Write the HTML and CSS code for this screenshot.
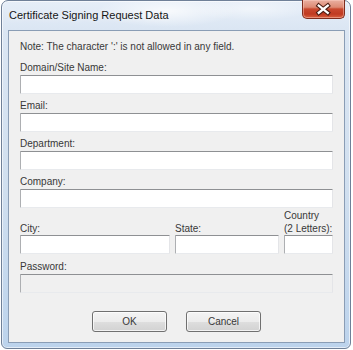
FILE: index.html
```html
<!DOCTYPE html>
<html>
<head>
<meta charset="utf-8">
<link rel="stylesheet" href="styles.css">
</head>
<body>
<div class="window">
  <div class="titlebar">
    <span class="title">Certificate Signing Request Data</span>
    <div class="close">
      <svg width="43" height="18" viewBox="0 0 43 18">
        <path d="M16.5 5.5 L26 13 M26 5.5 L16.5 13" stroke="#4a1c12" stroke-width="4.6" stroke-linecap="square" fill="none"/>
        <path d="M16.5 5.5 L26 13 M26 5.5 L16.5 13" stroke="#ffffff" stroke-width="2.4" stroke-linecap="square" fill="none"/>
      </svg>
    </div>
  </div>
  <div class="client">
    <p class="note">Note: The character ':' is not allowed in any field.</p>
    <div class="fields">
      <div class="field"><span class="label">Domain/Site Name:</span><div class="input"></div></div>
      <div class="field"><span class="label">Email:</span><div class="input"></div></div>
      <div class="field"><span class="label">Department:</span><div class="input"></div></div>
      <div class="field"><span class="label">Company:</span><div class="input"></div></div>
    </div>
    <div class="addr">
      <span class="alabel">City:</span>
      <span class="alabel">State:</span>
      <span class="alabel">Country<br>(2 Letters):</span>
      <div class="input"></div>
      <div class="input"></div>
      <div class="input"></div>
    </div>
    <div class="field pw"><span class="label">Password:</span><div class="input disabled"></div></div>
    <div class="buttons">
      <button class="btn">OK</button>
      <button class="btn">Cancel</button>
    </div>
  </div>
</div>
</body>
</html>
```
FILE: styles.css
```css
html, body {
  margin: 0;
  padding: 0;
  background: #ffffff;
}
body {
  font-family: "Liberation Sans", Arial, sans-serif;
  font-size: 10px;
  color: #383838;
}
.window {
  margin-left: 1px;
  width: 350px;
  height: 349px;
  box-sizing: border-box;
  border: 1px solid #6f8098;
  border-radius: 7px 7px 6px 6px;
  padding: 0 5px 5px 6px;
  display: flex;
  flex-direction: column;
  background:
    radial-gradient(ellipse 70px 16px at 165px 10px, rgba(255,255,255,0.75), rgba(255,255,255,0)),
    radial-gradient(ellipse 60px 12px at 250px 8px, rgba(255,255,255,0.5), rgba(255,255,255,0)),
    linear-gradient(180deg, #e6eef8 0px, #dbe6f3 28px, #d0dfef 55%, #bcd3ec 100%);
  box-shadow: inset 0 0 0 1px rgba(255,255,255,0.6);
}
.titlebar {
  height: 29px;
  display: flex;
  align-items: flex-start;
  flex-shrink: 0;
}
.title {
  padding-left: 1px;
  padding-top: 7px;
  line-height: 14px;
  font-size: 11px;
  color: #151515;
  text-shadow: 0 0 6px rgba(255,255,255,0.9);
}
.close {
  margin-left: auto;
  margin-top: -1px;
  width: 43px;
  height: 19px;
  box-sizing: border-box;
  border: 1px solid #7e2c1d;
  border-top: none;
  border-radius: 0 0 5px 5px;
  background: linear-gradient(180deg, #eab0a1 0%, #dd8a74 40%, #c9482e 50%, #c03a21 78%, #d9603f 100%);
  box-shadow: inset 0 0 0 1px rgba(255,210,200,0.45);
  display: flex;
}
.client {
  flex: 1;
  border: 1px solid #8a9db5;
  background: #f0f0f0;
  padding: 9px 11px 10px 11px;
  display: flex;
  flex-direction: column;
}
.note {
  margin: 0;
  line-height: 14px;
}
.fields {
  margin-top: 7px;
  display: flex;
  flex-direction: column;
  gap: 5px;
}
.field {
  display: flex;
  flex-direction: column;
}
.label {
  line-height: 14px;
  height: 14px;
}
.input {
  height: 19px;
  box-sizing: border-box;
  background: #ffffff;
  border-style: solid;
  border-width: 1px;
  border-color: #8e9093 #e4e5e8 #e8eaed #adafb2;
  border-radius: 1px;
}
.input.disabled {
  background: #f0f0f0;
}
.addr {
  margin-top: 1px;
  display: grid;
  grid-template-columns: 150px 104px 49px;
  grid-template-rows: 26px 19px;
  column-gap: 5px;
}
.alabel {
  align-self: end;
  line-height: 13px;
}
.pw {
  margin-top: 6px;
}
.buttons {
  margin-top: 18px;
  display: flex;
  justify-content: center;
  gap: 19px;
}
.btn {
  width: 75px;
  height: 21px;
  box-sizing: border-box;
  border: 1px solid #707070;
  border-radius: 3px;
  background: linear-gradient(180deg, #f4f4f4 0%, #ececec 50%, #dedede 52%, #d2d2d2 100%);
  box-shadow: inset 0 0 0 1px rgba(255,255,255,0.7);
  font-family: "Liberation Sans", Arial, sans-serif;
  font-size: 10px;
  color: #383838;
  padding: 0;
}
```
